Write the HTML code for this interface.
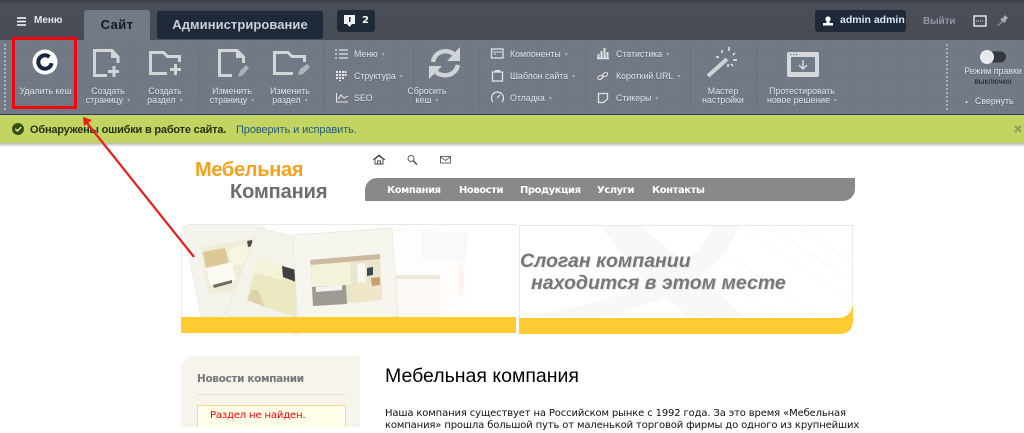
<!DOCTYPE html>
<html><head><meta charset="utf-8"><style>
html,body{margin:0;padding:0;background:#fff}
body{width:1024px;height:427px;overflow:hidden;position:relative;font-family:"Liberation Sans",sans-serif}
.a{position:absolute;white-space:nowrap}
.r{position:absolute;color:#dfe5ec;font-size:8.8px;line-height:9px;text-align:center;white-space:nowrap;text-shadow:0 1px 0 #5a616b}
.l{position:absolute;color:#dfe5ec;font-size:8.8px;line-height:11px;white-space:nowrap;text-shadow:0 1px 0 #5a616b}
.c{color:#a9b0ba;font-size:6px;vertical-align:1px;margin-left:4px;text-shadow:none}
.m{position:absolute;top:184px;color:#fff;font:bold 10px/13px "DejaVu Sans",sans-serif;letter-spacing:-.45px;white-space:nowrap}
.sep{position:absolute;top:46px;height:62px;width:1px;background:#68707b}
svg{position:absolute;left:0;top:0}
</style></head><body>
<div class="a" style="left:0;top:0;width:1024px;height:40px;background:linear-gradient(#3d4048 0,#3d4048 2px,#4a4e58 3px,#474c55 100%)"></div>
<div class="a" style="left:0;top:40px;width:1024px;height:74px;background-color:#727a86;background-image:radial-gradient(#6b737e .7px,transparent .8px);background-size:3px 3px"></div>
<div class="a" style="left:0;top:114px;width:1024px;height:1px;background:#2d3d66"></div>
<div class="a" style="left:0;top:115px;width:1024px;height:28px;background:#c3d463"></div>
<div class="a" style="left:0;top:143px;width:1024px;height:4px;background:linear-gradient(#b5b5b0,#fff)"></div>

<div class="a" style="left:84px;top:10px;width:66px;height:30px;background:#727a86;border-radius:3px 3px 0 0"></div>
<div class="a" style="left:84px;top:17px;width:66px;text-align:center;font:bold 13px/16px 'Liberation Sans',sans-serif;color:#14181f;letter-spacing:.4px">Сайт</div>
<div class="a" style="left:157px;top:10px;width:166px;height:29px;background:#1f2937;border-radius:3px;box-shadow:inset 0 1px 0 #3a4554"></div>
<div class="a" style="left:157px;top:17px;width:166px;text-align:center;font:bold 13px/16px 'Liberation Sans',sans-serif;color:#c9d0da;letter-spacing:.05px">Администрирование</div>
<div class="a" style="left:337px;top:10px;width:38px;height:22px;background:#1f2937;border-radius:3px"></div>
<div class="a" style="left:362px;top:14px;font:bold 10px/13px 'DejaVu Sans',sans-serif;color:#fff">2</div>
<div class="a" style="left:34px;top:14px;font:bold 10px/13px 'Liberation Sans',sans-serif;color:#dfe8f2">Меню</div>
<div class="a" style="left:815px;top:10px;width:91px;height:22px;background:#1f2937;border-radius:3px"></div>
<div class="a" style="left:840px;top:14px;font:bold 10.5px/13px 'Liberation Sans',sans-serif;color:#dce8f5">admin admin</div>
<div class="a" style="left:923px;top:15px;font:bold 10px/13px 'Liberation Sans',sans-serif;color:#8f97a2;letter-spacing:-.1px">Выйти</div>

<div class="r" style="left:13px;width:65px;top:87px">Удалить кеш</div>
<div class="r" style="left:78px;width:60px;top:87px">Создать<br>страницу<span class="c">▾</span></div>
<div class="r" style="left:135px;width:60px;top:87px">Создать<br>раздел<span class="c">▾</span></div>
<div class="r" style="left:202px;width:60px;top:87px">Изменить<br>страницу<span class="c">▾</span></div>
<div class="r" style="left:260px;width:60px;top:87px">Изменить<br>раздел<span class="c">▾</span></div>
<div class="r" style="left:397px;width:60px;top:87px">Сбросить<br>кеш<span class="c">▾</span></div>
<div class="r" style="left:693px;width:60px;top:87px">Мастер<br>настройки</div>
<div class="r" style="left:762px;width:80px;top:87px">Протестировать<br>новое решение<span class="c">▾</span></div>

<div class="l" style="left:354px;top:49px">Меню<span class="c">▾</span></div>
<div class="l" style="left:354px;top:71px">Структура<span class="c">▾</span></div>
<div class="l" style="left:354px;top:93px">SEO</div>
<div class="l" style="left:510px;top:49px">Компоненты<span class="c">▾</span></div>
<div class="l" style="left:510px;top:71px">Шаблон сайта<span class="c">▾</span></div>
<div class="l" style="left:510px;top:93px">Отладка<span class="c">▾</span></div>
<div class="l" style="left:616px;top:49px">Статистика<span class="c">▾</span></div>
<div class="l" style="left:616px;top:71px">Короткий URL<span class="c">▾</span></div>
<div class="l" style="left:616px;top:93px">Стикеры<span class="c">▾</span></div>
<div class="r" style="left:962px;width:62px;top:67px;font-size:8.8px">Режим правки</div>
<div class="a" style="left:962px;width:62px;top:76px;text-align:center;font-size:8px;line-height:11px;color:#20242b">выключен</div>
<div class="r" style="left:975px;top:97px">Свернуть</div>
<div class="a" style="left:965px;top:98px;font-size:6px;line-height:8px;color:#c5cbd2">▴</div>

<div class="sep" style="left:198px"></div><div class="sep" style="left:323px"></div><div class="sep" style="left:413px"></div><div class="sep" style="left:479px"></div><div class="sep" style="left:585px"></div><div class="sep" style="left:690px"></div><div class="sep" style="left:757px"></div>

<div class="a" style="left:30px;top:123px;font:bold 11px/14px 'Liberation Sans',sans-serif;color:#26330f;letter-spacing:-.2px">Обнаружены ошибки в работе сайта.</div>
<div class="a" style="left:236px;top:123px;font:11px/14px 'Liberation Sans',sans-serif;color:#1f5a78;letter-spacing:-.1px">Проверить и исправить.</div>

<div class="a" style="left:195px;top:158px;font:bold 20px/24px 'Liberation Sans',sans-serif;color:#f9a11b;letter-spacing:-.3px">Мебельная</div>
<div class="a" style="left:230px;top:180px;font:bold 20px/24px 'Liberation Sans',sans-serif;color:#6d6d6d;letter-spacing:-.1px">Компания</div>

<div class="a" style="left:365px;top:178px;width:490px;height:23px;background:#898989;border-radius:12px 0 12px 0"></div>
<div class="m" style="left:387px">Компания</div><div class="m" style="left:459px">Новости</div><div class="m" style="left:520px">Продукция</div><div class="m" style="left:597px">Услуги</div><div class="m" style="left:652px">Контакты</div>

<!-- banner -->
<div class="a" style="left:181px;top:224px;width:336px;height:100px;border-left:1px solid #e8eae8;border-top:1px solid #e8eae8;border-radius:10px 0 0 0;box-sizing:border-box;background:#fff"></div>
<div class="a" style="left:519px;top:225px;width:334px;height:108px;border:1px solid #e6ebe6;box-sizing:border-box;border-radius:0 0 12px 0;background:#fff"></div>
<svg width="1024" height="427" viewBox="0 0 1024 427">
<!-- right banner watermark -->
<path d="M600 226H640L700 275L745 318H690L640 275ZM713 226H738C725 275 660 305 600 318H520C620 300 695 275 713 226Z" fill="#f7f8f9"/>
<g stroke="#f3f4f6" stroke-width="1" opacity=".8">
<path d="M745 230L850 300M770 228L850 280M800 228L850 262M720 250L820 318M700 262L780 318M680 290L715 318"/>
</g>
<!-- faded cards -->
<polygon points="395,226 465,232 466,305 395,318" fill="#fefdfc"/>
<polygon points="421,230 468,233 466,262 421,258" fill="#f9f9f7"/>
<polygon points="396,275 440,275 440,318 396,318" fill="#fcf9f4"/>
<rect x="396" y="275" width="44" height="4" fill="#efe6da"/>
<rect x="458" y="265" width="6" height="30" fill="#fbf4f0"/>
<!-- card 1 -->
<polygon points="183,226 264,226 274,300 202,322" fill="#f5f4ec" stroke="#ebeae0" stroke-width=".7"/>
<polygon points="200,248 253,238 262,285 209,295" fill="#efedd8"/>
<polygon points="203,252 225,248 229,264 206,268" fill="#dcc894"/>
<polygon points="206,268 232,262 236,280 210,285" fill="#fbfaf2"/>
<polygon points="228,250 248,243 252,262 233,266" fill="#f8f6e0"/>
<polygon points="213,285 232,280 232,283 214,288" fill="#6d6a60"/>
<polygon points="247,241 252,240 253,246 248,247" fill="#4a4e52"/>
<!-- card 2 -->
<polygon points="258,228 300,238 298,335 225,315" fill="#f4f3ea" stroke="#e6e5da" stroke-width=".7"/>
<polygon points="258,257 296,270 296,318 247,300" fill="#ebe9c2"/>
<polygon points="258,257 285,266 282,280 252,272" fill="#f4f2d8"/>
<polygon points="282,266 296,270 296,282 283,277" fill="#3f4044"/>
<polygon points="247,300 265,307 258,290 252,290" fill="#ddd3aa"/>
<!-- card 3 -->
<polygon points="293,235 392,228 398,317 298,333" fill="#f6f5ee" stroke="#e6e5da" stroke-width=".7"/>
<polygon points="310,260 380,254 382,300 313,306" fill="#e9e6cd"/>
<polygon points="310,260 380,254 380,259 311,265" fill="#cdb9a0"/>
<polygon points="311,265 350,262 351,285 312,287" fill="#f4f2d8"/>
<polygon points="312,287 346,285 347,304 313,306" fill="#9d9b94"/>
<polygon points="316,287 342,285 342,290 316,292" fill="#f4f3ee"/>
<polygon points="350,285 382,283 382,300 352,303" fill="#efe7c8"/>
<polygon points="357,264 365,263 366,282 358,283" fill="#f8f8f0"/>
<polygon points="367,268 373,267 373,275 367,276" fill="#3d4a58"/>
<polygon points="371,278 380,277 380,285 372,286" fill="#c5a070"/>
<!-- yellow -->
<rect x="181" y="317" width="335" height="16" fill="#fecb30"/>
<path d="M519 318H838Q850 318 853 305V321Q852 334 840 334H519Z" fill="#fecb30"/>

<!-- ribbon grip -->
<path d="M5 44V110M947 44V110" stroke="#a9b0b9" stroke-width="2" stroke-dasharray="2 2"/>
<!-- delete cache -->
<circle cx="45" cy="62" r="12.500" fill="#fff"/>
<circle cx="45" cy="62" r="6.700" fill="none" stroke="#182744" stroke-width="4" stroke-dasharray="35 7.100" transform="rotate(10 45 62)"/>
<!-- menu burger -->
<path d="M17 18H26M17 21.5H26M17 25H26" stroke="#fff" stroke-width="1.5"/>
<!-- page icons -->
<g fill="none" stroke="#d3d6d8" stroke-width="3">
<path d="M107 75.500H94.500V50.500H112L118 57V63"/>
<path d="M167 73.500H150.500V52.500H163.500L167.500 56.500H179.500V62"/>
<path d="M232 75.500H219.500V50.500H237L243.500 57V63"/>
<path d="M293 73.500H274.500V52.500H288L292 56.500H304.500V62"/>
</g>
<path d="M111 49V58H119ZM236 49V58H244Z" fill="#d3d6d8"/>
<path d="M114 66V77M108 71.500H119M175.500 64V75M170 69.500H181" stroke="#d3d6d8" stroke-width="3"/>
<path d="M238 77L240 71L246 65L249 68L243 75ZM298 75L300 69L307 64L310 67L303 74Z" fill="#aeb3b8"/>
<!-- list icons -->
<path d="M335 50H337M335 54H337M335 58H337M339 50H348M339 54H348M339 58H348" stroke="#dfe3e6" stroke-width="1.300"/>
<path d="M337 71V79M340 71V81M343 71V79M345.500 71V76" stroke="#e6e9eb" stroke-width="2" stroke-dasharray="2 1"/>
<path d="M336.500 93V102H348M338 99L341 95L344 98L348 96" fill="none" stroke="#dfe3e6" stroke-width="1.100"/>
<!-- refresh -->
<g fill="none" stroke="#d0d4d6" stroke-width="4.500">
<path d="M433 62C435 51 447 48 455 55"/>
<path d="M458 65C455 76 443 78 436 72"/>
</g>
<path d="M460 47V61H447ZM429 79V66H442Z" fill="#d0d4d6"/>
<!-- column 2 icons -->
<rect x="491.500" y="49" width="11.500" height="9" fill="none" stroke="#e1e4e6" stroke-width="1.300"/>
<path d="M493 52H502M494 54H496" stroke="#e1e4e6"/>
<rect x="492.500" y="72" width="10" height="9" fill="none" stroke="#e1e4e6" stroke-width="1.300"/>
<path d="M495 71H500" stroke="#e1e4e6" stroke-width="2"/>
<path d="M493 102A6 6 0 1 1 502 102M497 98L500 95" fill="none" stroke="#e1e4e6" stroke-width="1.200"/>
<!-- column 3 icons -->
<path d="M597 58.500H609" stroke="#e1e4e6" stroke-width="1.500"/>
<path d="M598.500 58V54M601.500 58V51M604.500 58V48M607.500 58V52" stroke="#e1e4e6" stroke-width="2"/>
<path d="M600 80L604 76" stroke="#e1e4e6" stroke-width="1.200"/>
<rect x="598" y="76" width="5" height="3.500" rx="1.700" fill="none" stroke="#e1e4e6" transform="rotate(-40 600 78)"/>
<rect x="603" y="73" width="5" height="3.500" rx="1.700" fill="none" stroke="#e1e4e6" transform="rotate(-40 605 75)"/>
<path d="M598.500 93.500H607.500V99L603.500 102.500H598.500Z" fill="none" stroke="#e1e4e6" stroke-width="1.300"/>
<!-- wand -->
<path d="M708 76L727 59" stroke="#cfd3d6" stroke-width="4"/>
<path d="M722 50V53M729 47V51M735 53L733 55M737 60H733M719 57H716M728 64V67M733 66L731 64" stroke="#f0f2f3" stroke-width="1.400"/>
<!-- window -->
<rect x="787" y="52" width="32" height="25" rx="2" fill="#d6d9db"/>
<rect x="791" y="57" width="24" height="15" fill="#727a86"/>
<path d="M790 54.500H798" stroke="#727a86" stroke-dasharray="1.500 1.500" stroke-width="1.200"/>
<path d="M803 60V68M799 65L803 69L807 65" fill="none" stroke="#d6d9db" stroke-width="1.500"/>
<!-- toggle -->
<rect x="981" y="51.500" width="25" height="11" rx="5.500" fill="#33373e"/>
<circle cx="987" cy="57" r="7" fill="#e8e9ea"/>
<!-- top right icons -->
<circle cx="828" cy="19" r="2.600" fill="#fff"/>
<path d="M826.500 21H829.500V23H833V25.500H823V23H826.500Z" fill="#fff"/>
<path d="M344 15H355V24H352L349.500 27L347 24H344Z" fill="#f0f2f4"/>
<rect x="349" y="17" width="1.500" height="5" fill="#1f2937"/>
<rect x="974" y="16" width="12" height="10" fill="none" stroke="#dfe3e6" stroke-width="1.500"/>
<path d="M976 21H984" stroke="#dfe3e6" stroke-dasharray="1 1"/>
<path d="M997 26L1002 21L1000 19L1003 18L1005 15L1008 18L1006 20L1005 23L1003 21.500L998 26Z" fill="#a8aeb5"/>
<!-- green bar -->
<circle cx="18" cy="129" r="6" fill="#36510f"/>
<path d="M15.200 129L17.400 131L21 127" fill="none" stroke="#dbe8a5" stroke-width="1.500"/>
<path d="M1015 126L1021 132M1021 126L1015 132" stroke="#8f9e58" stroke-width="2"/>
<!-- top site icons -->
<path d="M375 164V159L379 156L383 159V164ZM373 160L379 155L385 160M377.500 164V161H380.500V164" fill="none" stroke="#444" stroke-width=".9"/>
<circle cx="411" cy="158.500" r="3" fill="none" stroke="#555" stroke-width=".9"/>
<path d="M413.500 161L417 164.500" stroke="#444" stroke-width="1.400"/>
<rect x="440.500" y="156.500" width="10" height="6.500" fill="none" stroke="#555" stroke-width=".9"/>
<path d="M440.500 157L445.500 160.500L450.500 157" fill="none" stroke="#555" stroke-width=".9"/>
<!-- red -->
<rect x="13.500" y="38.500" width="62" height="69" fill="none" stroke="#f5050d" stroke-width="3"/>
<path d="M194 257L87 123" stroke="#f01818" stroke-width="2.200" fill="none"/>
<path d="M83 117L92 120L84 126Z" fill="#f01818"/>
</svg>

<div class="a" style="left:520px;top:249px;font:italic bold 19.500px/24px 'Liberation Sans',sans-serif;color:#77777a;text-shadow:1px 1px 0 #e6e6e6">Слоган компании</div>
<div class="a" style="left:531px;top:271px;font:italic bold 19.500px/24px 'Liberation Sans',sans-serif;color:#77777a;text-shadow:1px 1px 0 #e6e6e6">находится в этом месте</div>

<div class="a" style="left:181px;top:356px;width:179px;height:71px;background:#f7f4ec;border-radius:12px 0 0 0"></div>
<div class="a" style="left:197px;top:372px;font:bold 10.500px/14px 'DejaVu Sans',sans-serif;color:#77777a;letter-spacing:-.35px">Новости компании</div>
<div class="a" style="left:197px;top:394px;width:148px;height:1px;background:#e6e3db"></div>
<div class="a" style="left:197px;top:405px;width:149px;height:22px;box-sizing:border-box;background:#fffce8;border:1px solid #fbd58c;border-bottom:0"></div>
<div class="a" style="left:210px;top:409px;font:10px/14px 'DejaVu Sans',sans-serif;color:#f00;letter-spacing:-.15px">Раздел не найден.</div>
<div class="a" style="left:385px;top:364px;font:19.500px/24px 'Liberation Sans',sans-serif;color:#000">Мебельная компания</div>
<div class="a" style="left:385px;top:407px;font:10px/14px 'DejaVu Sans',sans-serif;color:#111;letter-spacing:-.14px">Наша компания существует на Российском рынке с 1992 года. За это время «Мебельная</div>
<div class="a" style="left:385px;top:419px;font:10px/14px 'DejaVu Sans',sans-serif;color:#111;letter-spacing:-.14px">компания» прошла большой путь от маленькой торговой фирмы до одного из крупнейших</div>
</body></html>
